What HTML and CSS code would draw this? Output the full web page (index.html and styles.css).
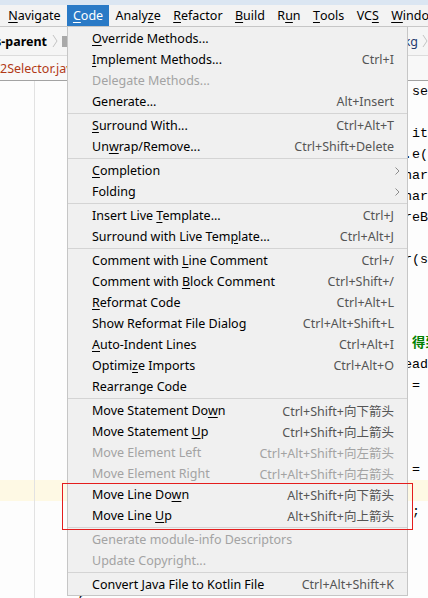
FILE: index.html
```html
<!DOCTYPE html>
<html lang="en">
<head>
<meta charset="utf-8">
<title>Code menu</title>
<link rel="stylesheet" href="styles.css">
</head>
<body>
<div class="titlebar"></div>
<nav class="menubar">
  <span class="mi"><u>N</u>avigate</span>
  <span class="mi active"><u>C</u>ode</span>
  <span class="mi">Analy<u>z</u>e</span>
  <span class="mi"><u>R</u>efactor</span>
  <span class="mi"><u>B</u>uild</span>
  <span class="mi">R<u>u</u>n</span>
  <span class="mi"><u>T</u>ools</span>
  <span class="mi">VC<u>S</u></span>
  <span class="mi"><u>W</u>indow</span>
</nav>
<div class="crumbs">
  <span class="crumb bold">s-parent</span>
  <svg class="chev" width="6" height="14" viewBox="0 0 6 14"><path d="M1 1 L5 7 L1 13" fill="none" stroke="#c4c4c4" stroke-width="1"/></svg>
  <svg class="folder" width="14" height="12" viewBox="0 0 14 12"><path d="M0 1 H5 L6 2 H14 V12 H0 Z" fill="#a9a9a9"/></svg>
  <span class="crumb pkg">pkg</span>
  <svg class="chev last" width="6" height="14" viewBox="0 0 6 14"><path d="M1 1 L5 7 L1 13" fill="none" stroke="#c4c4c4" stroke-width="1"/></svg>
</div>
<div class="tabs">
  <span class="tab">2Selector.java</span>
</div>
<div class="editor">
  <div class="gutter"></div>
  <div class="code">
    <div class="ln"> se</div>
    <div class="ln"></div>
    <div class="ln"> it</div>
    <div class="ln">.e(</div>
    <div class="ln">har</div>
    <div class="ln">har</div>
    <div class="ln">reB</div>
    <div class="ln"></div>
    <div class="ln">r(s</div>
    <div class="ln"></div>
    <div class="ln"></div>
    <div class="ln"></div>
    <div class="ln"> <span class="str">得到</span></div>
    <div class="ln">ead</div>
    <div class="ln"> =</div>
    <div class="ln"></div>
    <div class="ln"></div>
    <div class="ln"></div>
    <div class="ln"> =</div>
    <div class="ln caret"></div>
    <div class="ln"> ;</div>
    <div class="ln"></div>
    <div class="ln"></div>
    <div class="ln"></div>
    <div class="ln short">    }</div>
  </div>
</div>

<div class="popup">
  <div class="item"><span><u>O</u>verride Methods...</span></div>
  <div class="item"><span><u>I</u>mplement Methods...</span><span class="key">Ctrl+I</span></div>
  <div class="item off"><span>Delegate Methods...</span></div>
  <div class="item"><span>Generate...</span><span class="key">Alt+Insert</span></div>
  <div class="sep"></div>
  <div class="item"><span><u>S</u>urround With...</span><span class="key">Ctrl+Alt+T</span></div>
  <div class="item"><span>Un<u>w</u>rap/Remove...</span><span class="key">Ctrl+Shift+Delete</span></div>
  <div class="sep"></div>
  <div class="item"><span><u>C</u>ompletion</span><svg class="sub" width="5" height="8" viewBox="0 0 5 8"><path d="M0.5 0.5 L4 4 L0.5 7.5" fill="none" stroke="#8c8c8c" stroke-width="1"/></svg></div>
  <div class="item"><span>Folding</span><svg class="sub" width="5" height="8" viewBox="0 0 5 8"><path d="M0.5 0.5 L4 4 L0.5 7.5" fill="none" stroke="#8c8c8c" stroke-width="1"/></svg></div>
  <div class="sep"></div>
  <div class="item"><span>Insert Live <u>T</u>emplate...</span><span class="key">Ctrl+J</span></div>
  <div class="item"><span>Surround with Live Tem<u>p</u>late...</span><span class="key">Ctrl+Alt+J</span></div>
  <div class="sep"></div>
  <div class="item"><span>Comment with <u>L</u>ine Comment</span><span class="key">Ctrl+/</span></div>
  <div class="item"><span>Comment with <u>B</u>lock Comment</span><span class="key">Ctrl+Shift+/</span></div>
  <div class="item"><span><u>R</u>eformat Code</span><span class="key">Ctrl+Alt+L</span></div>
  <div class="item"><span>Show Reformat File Dialog</span><span class="key">Ctrl+Alt+Shift+L</span></div>
  <div class="item"><span><u>A</u>uto-Indent Lines</span><span class="key">Ctrl+Alt+I</span></div>
  <div class="item"><span>Optimi<u>z</u>e Imports</span><span class="key">Ctrl+Alt+O</span></div>
  <div class="item"><span>Rearrange Code</span></div>
  <div class="sep"></div>
  <div class="item"><span>Move Statement Do<u>w</u>n</span><span class="key">Ctrl+Shift+向下箭头</span></div>
  <div class="item"><span>Move Statement <u>U</u>p</span><span class="key">Ctrl+Shift+向上箭头</span></div>
  <div class="item off"><span>Move Element Left</span><span class="key">Ctrl+Alt+Shift+向左箭头</span></div>
  <div class="item off"><span>Move Element Right</span><span class="key">Ctrl+Alt+Shift+向右箭头</span></div>
  <div class="item"><span>Move Line Do<u>w</u>n</span><span class="key">Alt+Shift+向下箭头</span></div>
  <div class="item"><span>Move Line <u>U</u>p</span><span class="key">Alt+Shift+向上箭头</span></div>
  <div class="sep"></div>
  <div class="item off"><span>Generate module-info Descriptors</span></div>
  <div class="item off"><span>Update Copyright...</span></div>
  <div class="sep"></div>
  <div class="item"><span>Convert Java File to Kotlin File</span><span class="key">Ctrl+Alt+Shift+K</span></div>
</div>

<div class="mark"></div>
</body>
</html>
```

FILE: styles.css
```css
* { box-sizing: border-box; }

html, body {
  margin: 0;
  padding: 0;
  width: 428px;
  height: 598px;
  overflow: hidden;
}

body {
  position: relative;
  background: #fdfdfd;
  font-family: "Noto Sans", "Noto Sans CJK SC", sans-serif;
  font-size: 12.5px;
  color: #000;
}

u {
  text-decoration: underline;
  text-decoration-thickness: 1px;
  text-underline-offset: 2px;
}

.titlebar {
  height: 5px;
  background: #dbe6f2;
}

.menubar {
  display: flex;
  height: 22px;
  padding-left: 2px;
  background: #f3f3f3;
  border-bottom: 1px solid #c8c8c8;
  white-space: nowrap;
  overflow: hidden;
}

.mi {
  display: flex;
  align-items: center;
  height: 21px;
  padding: 0 6.2px;
  color: #000;
}

.mi.active {
  background: #2a7ac6;
  color: #fff;
}

.crumbs {
  display: flex;
  align-items: center;
  height: 29px;
  background: #f5f5f5;
  border-bottom: 1px solid #dcdcdc;
  white-space: nowrap;
  overflow: hidden;
}

.crumb {
  font-size: 12.5px;
}

.crumb.bold {
  font-weight: 700;
  margin-left: -5px;
}

.chev {
  margin: 0 3px 0 5px;
  flex: none;
}

.chev.last {
  margin: 0 0 0 4px;
}

.folder {
  flex: none;
  margin-left: 1px;
}

.crumb.pkg {
  margin-left: auto;
  color: #1f3a6e;
}

.tabs {
  display: flex;
  align-items: center;
  height: 25px;
  background: #f8f8f8;
  border-bottom: 1px solid #a3a3a3;
}

.tab {
  font-size: 12.5px;
  color: #b23a17;
}

.editor {
  display: flex;
  background: #fdfdfd;
  height: 518px;
}

.gutter {
  width: 35px;
  flex: none;
  border-right: 1px solid #e2e2e2;
  margin-right: -35px;
  position: relative;
  z-index: 1;
  pointer-events: none;
}

.code {
  flex: 1;
  font-family: "Liberation Mono", "Noto Sans CJK SC", monospace;
  font-size: 13.333px;
}

.ln {
  height: 21px;
  line-height: 21px;
  padding-left: 404px;
  white-space: pre;
  color: #000;
}

.ln.caret {
  background: #fef9e4;
}

.ln.short {
  padding-left: 44px;
}

.str {
  color: #008000;
  font-weight: 700;
}

/* popup menu */
.popup {
  position: absolute;
  left: 67px;
  top: 26px;
  width: 341px;
  padding-top: 1px;
  background: #f0f0f0;
  border: 1px solid #c6c6c6;
  z-index: 5;
}

.item {
  display: flex;
  align-items: center;
  justify-content: space-between;
  height: 21px;
  padding: 0 13px 0 24px;
  white-space: nowrap;
}

.item .key {
  color: #555;
}

.item.off,
.item.off .key {
  color: #a3a3a3;
}

.sub {
  margin-right: -6px;
}

.sep {
  height: 1px;
  margin: 1px 0;
  background: #d4d4d4;
}

.mark {
  position: absolute;
  left: 62px;
  top: 483px;
  width: 351px;
  height: 47px;
  border: 1px solid #e41d1d;
  z-index: 6;
}
```
